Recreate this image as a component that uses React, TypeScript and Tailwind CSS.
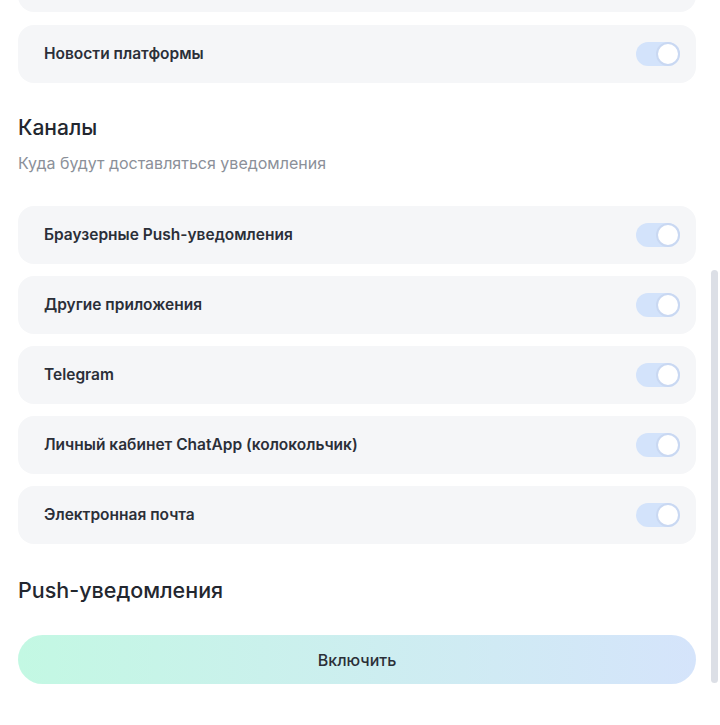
import React from "react";

const channels = [
  "Браузерные Push-уведомления",
  "Другие приложения",
  "Telegram",
  "Личный кабинет ChatApp (колокольчик)",
  "Электронная почта",
];

function Toggle({ on }: { on: boolean }) {
  return (
    <div
      className={`flex h-6 w-11 items-center rounded-full ${
        on ? "justify-end bg-[#d3e3fb]" : "justify-start bg-[#e5e7eb]"
      }`}
    >
      <div className="h-6 w-6 rounded-full border-2 border-[#c9d8f2] bg-white" />
    </div>
  );
}

function Row({ label }: { label: string }) {
  const [on, setOn] = React.useState(true);
  return (
    <div
      onClick={() => setOn(!on)}
      className="flex h-[58px] cursor-pointer items-center justify-between rounded-2xl bg-[#f5f6f8] pl-[26px] pr-4"
    >
      <span className="text-[15.5px] font-semibold text-[#2b2f38]">{label}</span>
      <Toggle on={on} />
    </div>
  );
}

export default function App() {
  return (
    <div
      className="relative h-[725px] w-full overflow-hidden bg-white"
      style={{ fontFamily: "Inter, 'Noto Sans', sans-serif" }}
    >
      <div className="flex flex-col pl-[18px] pr-6">
        <div className="-mt-[46px] h-[58px] rounded-2xl bg-[#f5f6f8]" />
        <div className="mt-[13px]">
          <Row label="Новости платформы" />
        </div>

        <h2 className="mt-[31px] text-[21px] font-medium leading-7 text-[#23272f]">Каналы</h2>
        <p className="mt-[9px] text-[16px] leading-6 text-[#8b9099]">
          Куда будут доставляться уведомления
        </p>

        <div className="mt-[31px] flex flex-col gap-3">
          {channels.map((c) => (
            <Row key={c} label={c} />
          ))}
        </div>

        <h2 className="mt-[30px] text-[21.5px] font-medium leading-8 text-[#23272f]">
          Push-уведомления
        </h2>

        <button className="mt-[29px] flex h-[49px] items-center justify-center rounded-full bg-gradient-to-r from-[#c3f8e3] to-[#d5e4fb] text-[16px] font-medium text-[#2b2f38]">
          Включить
        </button>
      </div>

      {/* scrollbar thumb */}
      <div className="absolute right-[2px] top-[270px] h-[413px] w-[7px] rounded-full bg-[#dcdfe6]" />
    </div>
  );
}
